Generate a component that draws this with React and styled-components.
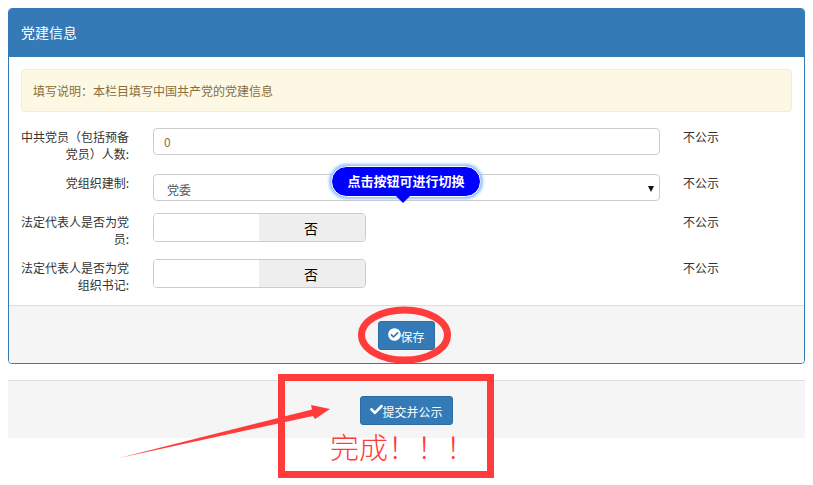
import styled, { createGlobalStyle } from "styled-components";
import { FaCheck, FaCheckCircle } from "react-icons/fa";

const GlobalStyle = createGlobalStyle`
  * { box-sizing: border-box; }
  html, body { margin: 0; background: #fff; }
  body {
    font-family: "Noto Sans CJK SC", "Liberation Sans", sans-serif;
    font-size: 12px;
    line-height: 17px;
    color: #333;
  }
`;

const Page = styled.div`
  position: relative;
  width: 813px;
  height: 485px;
  padding: 8px;
  overflow: hidden;
`;

const Panel = styled.section`
  border: 1px solid #337ab7;
  border-radius: 4px;
  overflow: hidden;
`;

const PanelTitle = styled.h3`
  margin: 0;
  height: 48px;
  padding: 0 12px;
  background: #337ab7;
  color: #fff;
  font-size: 14px;
  font-weight: 400;
  line-height: 46px;
`;

const PanelBody = styled.div`
  padding: 12px 12px 0;
`;

const Notice = styled.div`
  height: 43px;
  margin-bottom: 16px;
  padding: 0 11px;
  background: #fcf8e3;
  border: 1px solid #faebcc;
  border-radius: 4px;
  color: #8a6d3b;
  line-height: 42px;
`;

const Row = styled.div`
  display: grid;
  grid-template-columns: 108px 507px auto;
  column-gap: 24px;
  align-items: start;
  margin-bottom: 12px;
`;

const Label = styled.label`
  text-align: right;
  color: #333;
`;

const Note = styled.span`
  margin-left: -1px;
  color: #333;
`;

const ControlBase = styled.div`
  height: 27px;
  border: 1px solid #ccc;
  border-radius: 4px;
  background: #fff;
`;

const TextInput = styled(ControlBase).attrs({ as: "input" })`
  display: block;
  width: 100%;
  padding: 0 10px;
  color: #8a6d3b;
  font: inherit;
  outline: none;
`;

const SelectWrap = styled.div`
  position: relative;
  &::after {
    content: "";
    position: absolute;
    right: 6px;
    top: 12px;
    border-left: 3.5px solid transparent;
    border-right: 3.5px solid transparent;
    border-top: 6px solid #111;
  }
`;

const Select = styled(ControlBase).attrs({ as: "select" })`
  display: block;
  width: 100%;
  padding: 3px 0 0 13px;
  appearance: none;
  color: #555;
  font: inherit;
  outline: none;
`;

const Tip = styled.div`
  position: absolute;
  left: 178px;
  top: -8px;
  width: 150px;
  height: 31px;
  border: 1px solid #fff;
  border-radius: 16px;
  background: #0000ff;
  box-shadow: 0 0 3px 2px #8fc0ff;
  color: #fff;
  font-size: 13px;
  font-weight: 700;
  line-height: 28px;
  text-align: center;
  z-index: 2;
  &::after {
    content: "";
    position: absolute;
    left: 64px;
    top: 29px;
    border-left: 7px solid transparent;
    border-right: 7px solid transparent;
    border-top: 7px solid #0000ff;
  }
`;

const Toggle = styled.div`
  display: grid;
  grid-template-columns: 105px 1fr;
  width: 213px;
  height: 29px;
  border: 1px solid #ccc;
  border-radius: 4px;
  overflow: hidden;
`;

const ToggleOn = styled.span`
  background: #fff;
`;

const ToggleOff = styled.span`
  padding-right: 2px;
  background: #eee;
  color: #000;
  font-size: 14px;
  line-height: 28px;
  text-align: center;
`;

const Footer = styled.div`
  display: flex;
  justify-content: center;
  align-items: flex-start;
  height: ${(p) => p.$height}px;
  padding-top: 15px;
  background: #f5f5f5;
  border-top: 1px solid #ddd;
`;

const PageFooter = styled(Footer)`
  margin-top: 16px;
`;

const Button = styled.button`
  display: flex;
  align-items: center;
  height: 29px;
  padding: 2px ${(p) => p.$pad}px 0;
  background: #337ab7;
  border: 1px solid #2e6da4;
  border-radius: 3px;
  color: #fff;
  font: inherit;
  svg {
    flex: none;
    margin: -5px -1px 0 0;
  }
`;

const Overlay = styled.svg`
  position: absolute;
  inset: 0;
  pointer-events: none;
`;

const Done = styled.div`
  position: absolute;
  left: 330px;
  top: 426px;
  color: #ff3b3b;
  font-size: 29px;
  font-weight: 300;
  line-height: 40px;
  white-space: nowrap;
`;

const switchRows = ["法定代表人是否为党员:", "法定代表人是否为党组织书记:"];

export default function App() {
  return (
    <Page>
      <GlobalStyle />
      <Panel>
        <PanelTitle>党建信息</PanelTitle>
        <PanelBody>
          <Notice>填写说明：本栏目填写中国共产党的党建信息</Notice>
          <Row>
            <Label>中共党员（包括预备党员）人数:</Label>
            <TextInput defaultValue="0" />
            <Note>不公示</Note>
          </Row>
          <Row>
            <Label>党组织建制:</Label>
            <SelectWrap>
              <Select defaultValue="党委">
                <option>党委</option>
              </Select>
              <Tip>点击按钮可进行切换</Tip>
            </SelectWrap>
            <Note>不公示</Note>
          </Row>
          {switchRows.map((text) => (
            <Row key={text}>
              <Label>{text}</Label>
              <Toggle>
                <ToggleOn />
                <ToggleOff>否</ToggleOff>
              </Toggle>
              <Note>不公示</Note>
            </Row>
          ))}
        </PanelBody>
        <Footer $height={58}>
          <Button $pad={9}>
            <FaCheckCircle size={13} />
            保存
          </Button>
        </Footer>
      </Panel>
      <PageFooter $height={58}>
        <Button $pad={9}>
          <FaCheck size={13} />
          提交并公示
        </Button>
      </PageFooter>
      <Overlay width="813" height="485" viewBox="0 0 813 485">
        <ellipse cx="404.5" cy="335" rx="43" ry="25" fill="none" stroke="#ff3b3b" strokeWidth="7" />
        <rect x="281.5" y="377.5" width="209" height="97" fill="none" stroke="#ff3b3b" strokeWidth="7" />
        <polygon points="119,458 312,409.5 311,405 330,409 315,419 313,416" fill="#ff3b3b" />
      </Overlay>
      <Done>完成！！！</Done>
    </Page>
  );
}
